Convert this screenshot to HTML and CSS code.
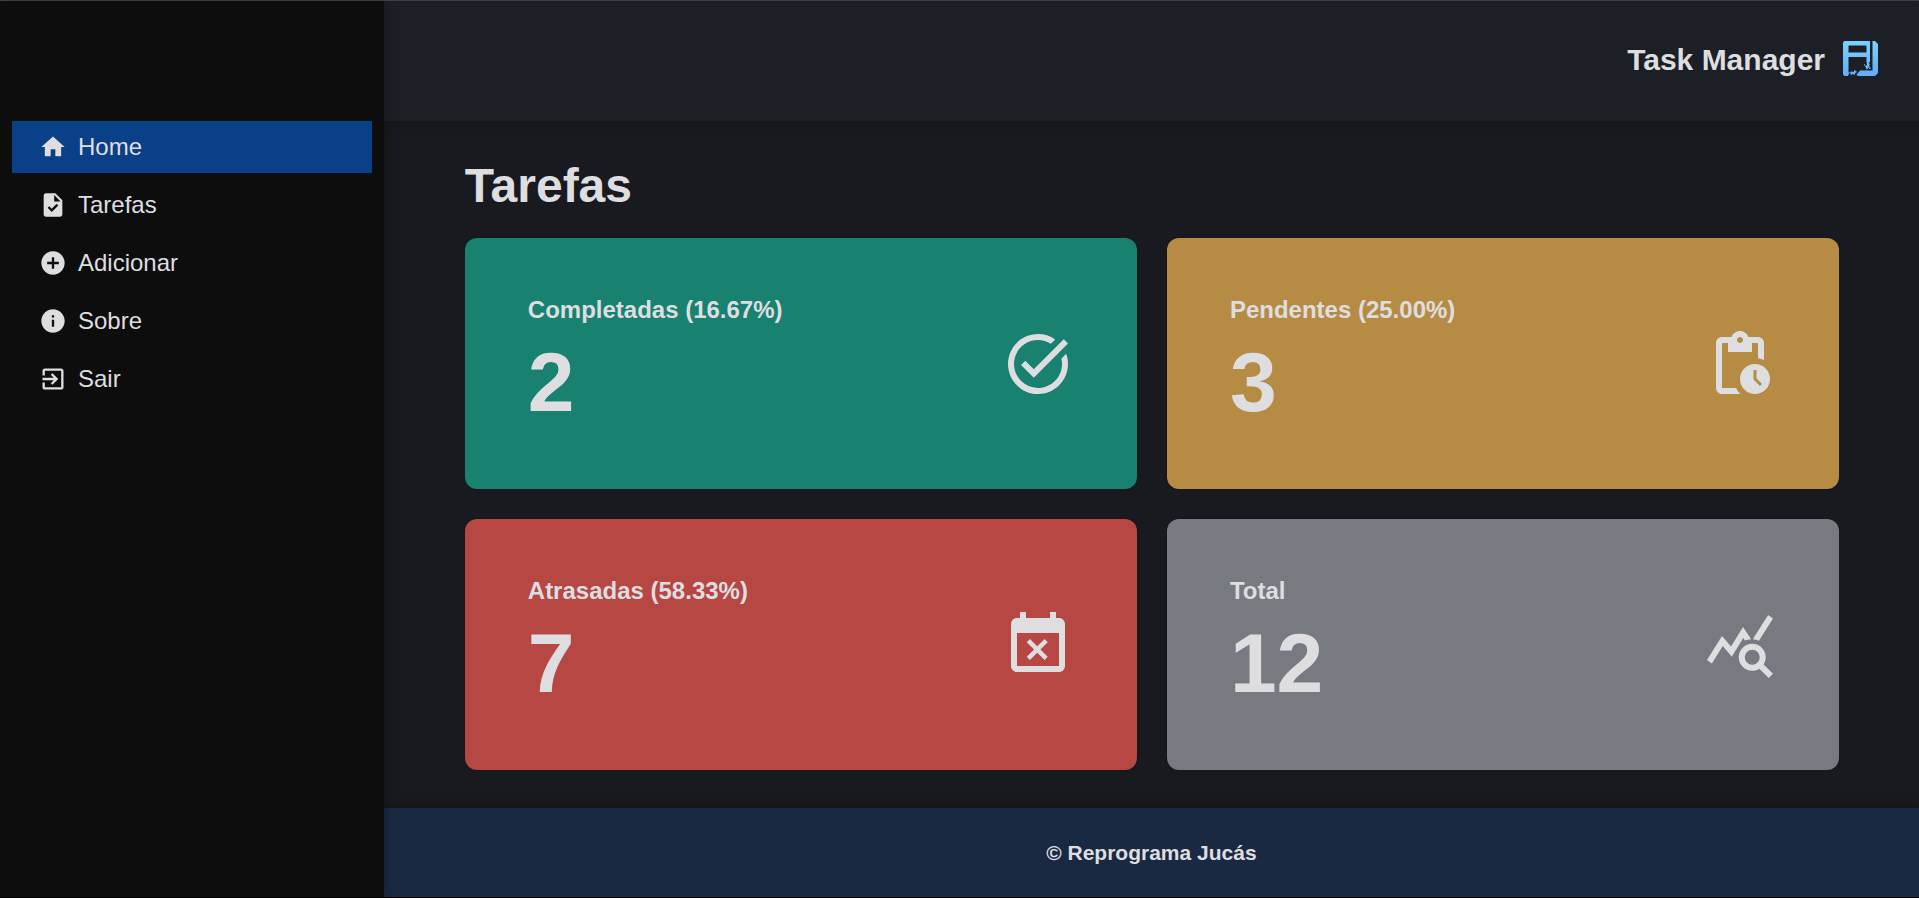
FILE: index.html
```html
<!DOCTYPE html>
<html lang="pt-BR">
<head>
<meta charset="utf-8">
<title>Task Manager</title>
<link rel="stylesheet" href="styles.css">
</head>
<body>
<div class="app">
  <aside class="sidebar">
    <nav class="menu">
      <a class="menu-link active" href="#"><svg class="menu-icon" viewBox="0 0 24 24"><path d="M10 20v-6h4v6h5v-8h3L12 3 2 12h3v8z"/></svg>Home</a>
      <a class="menu-link" href="#"><svg class="menu-icon" viewBox="0 0 24 24"><path d="M14 2H6c-1.100 0-1.990.9-1.990 2L4 20c0 1.100.890 2 1.990 2H18c1.100 0 2-.9 2-2V8l-6-6zM10.940 18L7.400 14.460l1.410-1.410 2.120 2.120 4.240-4.240 1.410 1.410L10.940 18zM13 9V3.500L18.500 9H13z"/></svg>Tarefas</a>
      <a class="menu-link" href="#"><svg class="menu-icon" viewBox="0 0 24 24"><path d="M12 2C6.480 2 2 6.480 2 12s4.480 10 10 10 10-4.480 10-10S17.520 2 12 2zm5 11h-4v4h-2v-4H7v-2h4V7h2v4h4v2z"/></svg>Adicionar</a>
      <a class="menu-link" href="#"><svg class="menu-icon" viewBox="0 0 24 24"><path d="M12 2C6.480 2 2 6.480 2 12s4.480 10 10 10 10-4.480 10-10S17.520 2 12 2zm1 15h-2v-6h2v6zm0-8h-2V7h2v2z"/></svg>Sobre</a>
      <a class="menu-link" href="#"><svg class="menu-icon" viewBox="0 0 24 24"><path d="M10.090 15.590L11.500 17l5-5-5-5-1.410 1.410L12.670 11H3v2h9.670l-2.580 2.590zM19 3H5c-1.110 0-2 .9-2 2v4h2V5h14v14H5v-4H3v4c0 1.100.890 2 2 2h14c1.100 0 2-.9 2-2V5c0-1.100-.9-2-2-2z"/></svg>Sair</a>
    </nav>
  </aside>
  <div class="page">
    <header class="header">
      <span class="brand">Task Manager</span>
      <svg class="logo" viewBox="0 0 35 35">
        <defs><linearGradient id="sky" x1="0" y1="0" x2="0" y2="35" gradientUnits="userSpaceOnUse"><stop offset="0" stop-color="#7bd2fb"/><stop offset="1" stop-color="#62adf6"/></linearGradient></defs>
        <g fill="url(#sky)">
          <path fill-rule="evenodd" d="M1.500 0H27V21l-1.500 1 1.500 1-1 2 1 1-2 1-1 2-1-2-1-2 2-1-.5-3V16H5.500V31.500H7l-1.500 2L5 35H1.500L0 33.500V1.500zM5.500 4.500V11.500H23.500V4.500z"/>
          <path d="M29.500 0H32L35 3V32L32 35H15l-1.500-1.500L15 32l2-2.500H29.500z"/>
          <path d="M7 31l2-.5 2 .5 0-2 2 1 1 1-2 1.500 0 1.500-2-1-2 1zM21 23l1.500 1-1.500 1zM26 26.500l1.500 0 0 1.500-1.500 0z"/>
        </g>
      </svg>
    </header>
    <main class="main">
      <h1 class="title">Tarefas</h1>
      <div class="cards">
        <section class="card done">
          <div><h2 class="card-label">Completadas (16.67%)</h2><p class="card-value">2</p></div>
          <svg class="card-icon" viewBox="0 0 24 24"><path d="M22 5.180L10.590 16.600l-4.240-4.240 1.410-1.410 2.830 2.830 10-10L22 5.180zm-2.210 5.040c.130.570.210 1.170.210 1.780 0 4.420-3.580 8-8 8s-8-3.580-8-8 3.580-8 8-8c1.580 0 3.040.460 4.280 1.250l1.440-1.440A9.900 9.900 0 0012 2C6.480 2 2 6.480 2 12s4.480 10 10 10 10-4.480 10-10c0-1.190-.220-2.330-.6-3.390l-1.610 1.610z"/></svg>
        </section>
        <section class="card pending">
          <div><h2 class="card-label">Pendentes (25.00%)</h2><p class="card-value">3</p></div>
          <svg class="card-icon" viewBox="0 0 24 24"><path d="M17 12c-2.760 0-5 2.240-5 5s2.240 5 5 5 5-2.240 5-5-2.240-5-5-5zm1.650 7.350L16.500 17.200V14h1v2.790l1.850 1.850-.7.710zM18 3h-3.180C14.400 1.840 13.300 1 12 1s-2.400.840-2.820 2H6c-1.100 0-2 .9-2 2v15c0 1.100.9 2 2 2h6.110a6.743 6.743 0 01-1.420-2H6V5h2v3h8V5h2v5.080c.710.1 1.380.310 2 .6V5c0-1.100-.9-2-2-2zm-6 2c-.550 0-1-.450-1-1s.450-1 1-1 1 .450 1 1-.450 1-1 1z"/></svg>
        </section>
        <section class="card late">
          <div><h2 class="card-label">Atrasadas (58.33%)</h2><p class="card-value">7</p></div>
          <svg class="card-icon" viewBox="0 0 24 24"><path d="M9.310 17l2.440-2.440L14.190 17l1.060-1.060-2.440-2.440 2.440-2.440L14.190 10l-2.440 2.440L9.310 10l-1.060 1.060 2.440 2.440-2.440 2.440L9.310 17zM19 3h-1V1h-2v2H8V1H6v2H5c-1.110 0-1.990.9-1.990 2L3 19c0 1.100.890 2 2 2h14c1.100 0 2-.9 2-2V5c0-1.100-.9-2-2-2zm0 16H5V8h14v11z"/></svg>
        </section>
        <section class="card total">
          <div><h2 class="card-label">Total</h2><p class="card-value">12</p></div>
          <svg class="card-icon" viewBox="0 0 24 24"><path d="M19.880 18.470c.440-.7.7-1.510.7-2.390 0-2.490-2.010-4.500-4.500-4.500s-4.500 2.010-4.500 4.500 2.010 4.500 4.490 4.500c.880 0 1.700-.260 2.390-.7L21.580 23 23 21.580l-3.120-3.110zm-3.800.110a2.500 2.500 0 010-5 2.500 2.500 0 010 5zm-.360-8.500c-.740.020-1.450.180-2.100.450l-.550-.830-3.800 6.180-3.010-3.520-3.630 5.810L1 17l5-8 3 3.500L13 6l2.720 4.080zm2.590.5c-.640-.280-1.330-.450-2.050-.490L21.380 2 23 3.180l-4.690 7.400z"/></svg>
        </section>
      </div>
    </main>
    <footer class="footer">© Reprograma Jucás</footer>
  </div>
</div>
</body>
</html>
```
FILE: styles.css
```css
* {
  box-sizing: border-box;
  margin: 0;
}

body {
  background: #191a1f;
  color: #dedee0;
  font-family: "Liberation Sans", Arial, sans-serif;
}

.app {
  display: grid;
  grid-template-columns: 1fr 4fr;
  min-height: 100vh;
  border-top: 1px solid #45484a;
  border-bottom: 1px solid #000;
}

.sidebar {
  z-index: 1;
  padding: 120px 12px 0;
  background: #0d0d0d;
  box-shadow: 0 0 12px rgba(0, 0, 0, 0.3);
}

.menu {
  display: flex;
  flex-direction: column;
  gap: 6px;
}

.menu-link {
  display: flex;
  align-items: center;
  gap: 11px;
  height: 52px;
  padding: 0 27px;
  color: inherit;
  font-size: 24px;
  text-decoration: none;
}

.menu-link.active {
  background: #0a4087;
}

.menu-icon {
  width: 28px;
  height: 28px;
  fill: currentColor;
}

.page {
  display: flex;
  flex-direction: column;
}

.header {
  display: flex;
  align-items: center;
  justify-content: flex-end;
  gap: 18px;
  height: 120px;
  padding: 0 41px 2px;
  background: #1c1f26;
  box-shadow: 0 0 12px rgba(0, 0, 0, 0.3);
}

.brand {
  font-size: 30px;
  font-weight: bold;
}

.logo {
  width: 35px;
  height: 35px;
  margin-bottom: 4px;
}

.main {
  display: flex;
  flex: 1;
  flex-direction: column;
  gap: 24px;
  padding: 37px 80px 38px 81px;
}

.title {
  font-size: 48px;
  line-height: 56px;
}

.cards {
  display: grid;
  flex: 1;
  grid-template-columns: 1fr 1fr;
  grid-auto-rows: 1fr;
  gap: 30px;
}

.card {
  display: flex;
  align-items: center;
  justify-content: space-between;
  padding: 0 63px;
  border-radius: 12px;
  box-shadow: 0 0 3px rgba(0, 0, 0, 0.2);
}

.done {
  background: #18816f;
}

.pending {
  background: #b68c45;
}

.late {
  background: #b64743;
}

.total {
  background: #787a82;
}

.card-label {
  font-size: 24px;
  line-height: 28px;
}

.card-value {
  margin: 10px 0 2px;
  font-size: 84px;
  font-weight: bold;
  line-height: 96px;
}

.card-icon {
  width: 72px;
  height: 72px;
  fill: currentColor;
}

.footer {
  display: flex;
  align-items: center;
  justify-content: center;
  height: 89px;
  background: #1a2942;
  box-shadow: 0 0 12px rgba(0, 0, 0, 0.3);
  font-size: 21px;
  font-weight: bold;
}
```
